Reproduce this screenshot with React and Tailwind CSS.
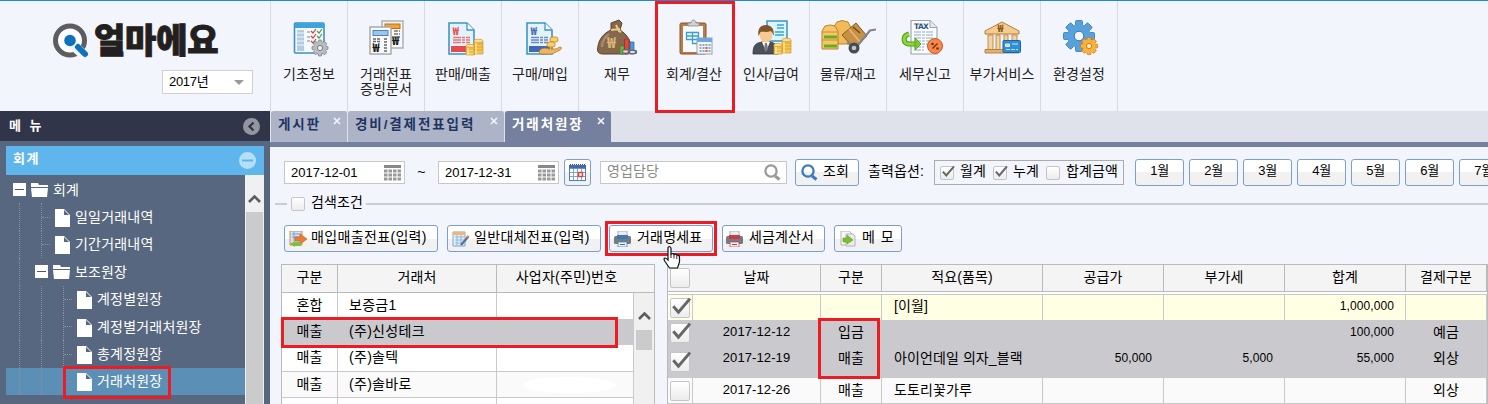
import React from 'react'


const toolbar = [
  { lines: ['기초정보'], icon: 'basic' },
  { lines: ['거래전표', '증빙문서'], icon: 'slip' },
  { lines: ['판매/매출'], icon: 'sales' },
  { lines: ['구매/매입'], icon: 'purchase' },
  { lines: ['재무'], icon: 'finance' },
  { lines: ['회계/결산'], icon: 'account', marked: true },
  { lines: ['인사/급여'], icon: 'hr' },
  { lines: ['물류/재고'], icon: 'stock' },
  { lines: ['세무신고'], icon: 'tax' },
  { lines: ['부가서비스'], icon: 'extra' },
  { lines: ['환경설정'], icon: 'settings' },
]

const tree = [
  { label: '회계', depth: 0, folder: true },
  { label: '일일거래내역', depth: 1 },
  { label: '기간거래내역', depth: 1 },
  { label: '보조원장', depth: 1, folder: true },
  { label: '계정별원장', depth: 2 },
  { label: '계정별거래처원장', depth: 2 },
  { label: '총계정원장', depth: 2 },
  { label: '거래처원장', depth: 2, selected: true },
]

const months = ['1월', '2월', '3월', '4월', '5월', '6월', '7월']

const customers = [
  { type: '혼합', name: '보증금1', h: 'h-[26px] bg-white' },
  { type: '매출', name: '(주)신성테크', h: 'h-[26px] bg-[#c9c9ce]', marked: true },
  { type: '매출', name: '(주)솔텍', h: 'h-[27px] bg-white border-b border-[#c9c9cc]' },
  { type: '매출', name: '(주)솔바로', h: 'h-[26px] bg-[#fafafa] border-b border-[#c9c9cc]', blank: true },
  { type: '', name: '', h: 'h-[8px] bg-white' },
]

const ledger = [
  { checked: true, date: '', type: '', memo: '[이월]', supply: '', vat: '', total: '1,000,000', pay: '', h: 'h-[25px] bg-[#ffffe4] leading-[22px]' },
  { checked: true, date: '2017-12-12', type: '입금', memo: '', supply: '', vat: '', total: '100,000', pay: '예금', h: 'h-[26px] bg-[#c9c9ce] leading-[24px]' },
  { checked: true, date: '2017-12-19', type: '매출', memo: '아이언데일 의자_블랙', supply: '50,000', vat: '5,000', total: '55,000', pay: '외상', h: 'h-[32px] bg-[#c9c9ce] leading-[24px]' },
  { checked: false, date: '2017-12-26', type: '매출', memo: '도토리꽃가루', supply: '', vat: '', total: '', pay: '외상', h: 'h-[26px] bg-[#fafafa] border-b border-[#c9c9cc] leading-[24px]' },
]

const ledgerCols = 'grid grid-cols-[25px_128px_61px_161px_121px_121px_121px_81px]'


const RedFrame = ({ cn }) => (
  <div className={`absolute z-10 border-[3px] border-[#ed1c24] pointer-events-none ${cn}`}></div>
)

const Coins = ({ x, y }) => (
  <g transform={`translate(${x} ${y})`} stroke="#c98a1c" strokeWidth=".6">
    <path d="M8 2v13h9V2z" fill="#f7c64f" />
    <path d="M0 7v9h8V7z" fill="#fbd367" />
    <path d="M8 5h9M8 8h9M8 11h9M0 10h8M0 13h8" />
    <path d="M10 3v12M2 8v8" stroke="#ffecac" strokeWidth="1.3" />
    <ellipse cx="12.5" cy="2" rx="4.6" ry="1.8" fill="#ffe08a" />
    <ellipse cx="4" cy="7" rx="4.2" ry="1.7" fill="#ffe08a" />
  </g>
)

// document with a folded corner, shared by sales and purchase
const WonDoc = ({ color, x }) => (
  <g transform={`translate(${x} 3)`}>
    <path d="M1 1h18l7 7v24H1z" fill="#e4f3fb" stroke="#3c97c4" strokeWidth="1.6" />
    <path d="M19 1v7h7" fill="#fff" stroke="#3c97c4" strokeWidth="1.3" />
    <text x="4.5" y="13" fontSize="11" fontWeight="700" fill={color} fontFamily="Noto Sans CJK KR">₩</text>
    <path d="M5 15.500h17M5 18h17M5 20.500h17" stroke={color} strokeWidth="1.400" strokeDasharray="8 1 3 1" opacity=".75" />
    <path d="M3 24h21v6H3z" fill={color} />
  </g>
)

const Gear = ({ cx, cy, r, fill, stroke, hole, tooth, bg }) => (
  <g>
    {[0, 45, 90, 135].map((a) => (
      <rect key={a} x={cx - tooth / 2} y={cy - r} width={tooth} height={r * 2} rx="1" fill={fill} stroke={stroke} strokeWidth=".8" transform={`rotate(${a} ${cx} ${cy})`} />
    ))}
    <circle cx={cx} cy={cy} r={r * 0.76} fill={fill} />
    <circle cx={cx} cy={cy} r={hole} fill={bg} stroke={stroke} strokeWidth="1" />
  </g>
)

const icons = {
  basic: (
    <>
      <rect x="13.500" y="4" width="29.500" height="30" rx="1" fill="#f4f9fd" stroke="#3c93c0" strokeWidth="1.600" />
      <path d="M14 4h29v5H14z" fill="#3aa3e0" />
      <path d="M16 11h7v21h-7z" fill="#b4cbe4" />
      <path d="M16 14h7M16 18h7M16 22h7M16 26h7" stroke="#fff" strokeWidth=".8" />
      <path d="M26 13h3M26 18h3M26 22h3" stroke="#aaa" strokeWidth="1.300" />
      <path d="M30 12l2 2 3-4M30 17l2 2 3-4M30 22l2 2 3-4" stroke="#d3453c" strokeWidth="1.200" fill="none" />
      <path d="M36 12l2 2 3-4M36 17l2 2 3-4" stroke="#4f9b42" strokeWidth="1.200" fill="none" />
      <Gear cx={39} cy={29} r={8} tooth={3.6} fill="#b9bcc0" stroke="#777b80" hole={2.6} bg="#eef2f7" />
    </>
  ),
  slip: (
    <>
      <rect x="24" y="2" width="21" height="27" fill="#f7f7f7" stroke="#aeb1b5" strokeWidth="1.500" />
      <rect x="27" y="5" width="15" height="4.500" fill="#f6a23a" stroke="#c06e10" />
      <path d="M27 13h6M36 12h6M36 15h6M36 18h6" stroke="#777" strokeWidth="1.300" strokeDasharray="4 1" />
      <text x="34" y="25.500" fontSize="12" fontWeight="700" fill="#111" fontFamily="Noto Sans CJK KR">₩</text>
      <rect x="12" y="8" width="21" height="27" fill="#fafafa" stroke="#a7aaae" strokeWidth="1.500" />
      <rect x="15" y="11.500" width="15" height="5" fill="#9cc6ef" stroke="#5183bb" />
      <path d="M15 20h7M15 22.500h7M26 20h4M26 23h4M26 26h4M26 29h4M26 32h4" stroke="#666" strokeWidth="1.300" strokeDasharray="3 1" />
      <text x="14.500" y="33" fontSize="12" fontWeight="700" fill="#111" fontFamily="Noto Sans CJK KR">₩</text>
    </>
  ),
  sales: (
    <>
      <WonDoc color="#e54a4f" x={13} />
      <Coins x={31} y={20} />
    </>
  ),
  purchase: (
    <>
      <WonDoc color="#4468b4" x={14} />
      <path d="M27 32c5-5 8-2 11-2h6l4-2c2 0 2 2 0 3l-8 4H28z" fill="#f0b562" stroke="#b87821" strokeWidth=".8" />
      <rect x="38" y="18" width="8" height="5" rx="2" fill="#f9cf6c" stroke="#c48418" strokeWidth=".8" />
      <rect x="35" y="23" width="8" height="5" rx="2" fill="#f9cf6c" stroke="#c48418" strokeWidth=".8" />
    </>
  ),
  finance: (
    <>
      <path d="M22 4l8-3 3 3-2 7c7 4 12 12 11 20-1 4-3 4-7 4H14C8 35 8 31 9 27c1-7 6-13 13-16z" fill="#85684b" stroke="#5c432b" strokeWidth="1" />
      <path d="M20 15c-4 3-7 8-7 13" stroke="#a98a67" strokeWidth="2.500" fill="none" />
      <path d="M22 11l9-1M27 6l3 6 2 1" stroke="#e8c989" strokeWidth="2" fill="none" />
      <text x="18" y="28.500" fontSize="15" fontWeight="700" fill="#dcb878" fontFamily="Noto Sans CJK KR">₩</text>
      <path d="M31 27h4v8h-4z" fill="#71b443" stroke="#447b22" strokeWidth=".7" />
      <path d="M35.500 20h4.500v15h-4.500z" fill="#e1473c" stroke="#98261f" strokeWidth=".7" />
      <path d="M41 23h4v12h-4z" fill="#4b9bdc" stroke="#27659a" strokeWidth=".7" />
      <path d="M35 32.500h5M41 33h5" stroke="#666b70" strokeWidth="4.500" strokeLinecap="round" />
      <path d="M35 32.500h3M42 33h3" stroke="#dfe3e6" strokeWidth="1.800" strokeLinecap="round" />
    </>
  ),
  account: (
    <>
      <rect x="14" y="4" width="26" height="31" rx="1.500" fill="#b97d4a" stroke="#85542b" strokeWidth="1" />
      <rect x="17" y="7" width="20" height="26" fill="#f8fafc" />
      <path d="M22 7V4h3c0-4 5-4 5 0h3v3z" fill="#ced2d6" stroke="#858b91" strokeWidth=".8" />
      <path d="M20.500 13.500h12v7h-12zM20.500 17h12M26.500 13.500v11h6" stroke="#36a0d5" strokeWidth="1.300" fill="none" />
      <rect x="31" y="19" width="15" height="16" fill="#f4f6f8" stroke="#95a0aa" strokeWidth="1" />
      <path d="M31 19h15v4H31z" fill="#6da9dc" />
      <path d="M33.500 26h11M33.500 29h11M33.500 32h11" stroke="#7290ac" strokeWidth="1.700" strokeDasharray="2 1" />
      <path d="M39.500 29h2M39.500 32h2" stroke="#e64b3c" strokeWidth="1.700" />
    </>
  ),
  hr: (
    <>
      <path d="M24 2h20v20H24z" fill="#dff3fd" stroke="#3498c8" strokeWidth="1.500" />
      <path d="M34 6h7M34 9h7M32 13h9M32 16h9" stroke="#34a6e0" strokeWidth="1.700" />
      <path d="M10 35c0-8 2-11 9-12h8c6 1 8 4 8 12z" fill="#4d5057" stroke="#303238" strokeWidth=".8" />
      <path d="M19 23l4 9 4-9z" fill="#fff" />
      <path d="M22 24h2l1 6-2 3-2-3z" fill="#777d85" />
      <ellipse cx="23" cy="15.500" rx="6.500" ry="8" fill="#f6cb91" />
      <path d="M15.500 17C14 8 19 6 23 6s9 3 7.500 11c-1-3-1-4-3-5-4 2-8 0-10 1-1 1-1 3-2 4z" fill="#7f5628" />
      <Coins x={31} y={19} />
    </>
  ),
  stock: (
    <>
      <path d="M13 9l4-6 5-1.500 6 1.500 3 6v16H13z" fill="#f0bb58" stroke="#b9822a" strokeWidth="1" />
      <path d="M2 12l3-5 5-1 5 1 3 5v18H2z" fill="#f6c668" stroke="#b9822a" strokeWidth="1" />
      <path d="M2 13h16M2 21h16" stroke="#c88f30" strokeWidth="1" />
      <path d="M4 18h13M4 27h13" stroke="#67ad27" strokeWidth="3" />
      <path d="M22 16L36 4l11 13-13 12z" fill="#c89045" stroke="#845a22" strokeWidth="1" />
      <path d="M29 10l11 13" stroke="#e5b878" strokeWidth="1.700" />
      <path d="M33 8l7 6" stroke="#6f4919" strokeWidth="1.500" />
      <path d="M56 10.500l-6 1-14 17-9-5" stroke="#80868c" strokeWidth="2.200" fill="none" />
      <circle cx="34" cy="29" r="5.500" fill="#484c51" />
      <circle cx="34" cy="29" r="2.300" fill="#c1c5c9" />
    </>
  ),
  tax: (
    <>
      <path d="M14 1.500h19l7 7V35H14z" fill="#fbfcfd" stroke="#9aa1a8" strokeWidth="1.100" />
      <path d="M33 1.500v7h7" fill="#e6eaee" stroke="#9aa1a8" />
      <text x="17" y="10" fontSize="7.500" fontWeight="700" fill="#31557f" fontFamily="DejaVu Sans" textLength="15">TAX</text>
      <path d="M17 13h20M17 16h20M17 19h20M17 22h20M17 25h16M17 28h10M17 31h10" stroke="#90a8c3" strokeWidth="1.200" strokeDasharray="7 1 3 1" />
      <path d="M12 15c-7 2-6 10 0 10h7" stroke="#4c9e16" strokeWidth="5" fill="none" />
      <path d="M12 15c-7 2-6 10 0 10h7" stroke="#93d63c" strokeWidth="3" fill="none" />
      <path d="M18 19l6 6-6 6z" fill="#7bc92a" stroke="#4c9e16" strokeWidth=".8" />
      <circle cx="38" cy="27" r="7.500" fill="#f5884a" stroke="#cd5a20" strokeWidth="1" />
      <path d="M35.500 29.500l5-5" stroke="#7a3110" strokeWidth="1.500" />
      <circle cx="35.500" cy="25" r="1.300" fill="#7a3110" />
      <circle cx="40.500" cy="29.500" r="1.300" fill="#7a3110" />
    </>
  ),
  extra: (
    <>
      <path d="M11 12L28 3l17 9v3H11z" fill="#f4cc8d" stroke="#b57c35" strokeWidth="1" />
      <text x="23.500" y="13" fontSize="10" fontWeight="700" fill="#815321" fontFamily="Noto Sans CJK KR">₩</text>
      <path d="M14 16h5v15h-5zM22 16h4v15h-4zM30 16h4v15h-4zM38 16h5v15h-5z" fill="#f4d3a0" stroke="#b9853f" strokeWidth=".9" />
      <path d="M11 30.500h34V34H11z" fill="#e5b26b" stroke="#a9722d" strokeWidth=".8" />
      <rect x="29" y="21.500" width="17.500" height="12" rx="1" fill="#2e8fd8" stroke="#1765a4" strokeWidth="1" />
      <path d="M31.500 25h4v2.500h-4zM38 25h6" fill="#f7cf65" stroke="#dff1ff" strokeWidth=".9" />
      <path d="M32 30.500h12" stroke="#b6dcf7" strokeWidth="1.200" strokeDasharray="4 1" />
    </>
  ),
  settings: (
    <>
      <Gear cx={28} cy={17} r={15.5} tooth={7} fill="#57a2dc" stroke="#3476b1" hole={4.8} bg="#f2f5fb" />
      <Gear cx={38} cy={27} r={8.6} tooth={4} fill="#f9b13e" stroke="#ca7c16" hole={2.6} bg="#fff0cd" />
    </>
  ),
}

const ToolItem = ({ item }) => (
  <div className="relative flex w-[77px] shrink-0 flex-col items-center border-r border-[#d6dae3] pt-[18px]">
    <svg className="h-[38px] w-14" viewBox="0 0 56 38">{icons[item.icon]}</svg>
    <div className="mt-[10px] text-center leading-[15px] whitespace-nowrap text-[#222]">
      {item.lines.map((l) => <div key={l}>{l}</div>)}
    </div>
    {item.marked && <RedFrame cn="-left-px top-0 h-[112px] w-[80px]" />}
  </div>
)

const Header = () => (
  <header className="flex h-[111px] border-t border-[#2189cf] bg-[#f2f5fb]">
    <div className="w-[271px] shrink-0 border-r border-[#d6dae3]">
      <div className="flex h-[57px] items-start pl-[52px] pt-[21px]">
        <svg className="h-9 w-[38px]" viewBox="0 0 38 36">
          <circle cx="18" cy="18.500" r="14.500" fill="#fff" stroke="#5b5d60" strokeWidth="5" />
          <path d="M20 22l15 14" stroke="#f2f5fb" strokeWidth="10" />
          <circle cx="18" cy="18.500" r="5.800" fill="#0e72ba" />
          <path d="M26 25l7 7" stroke="#0e72ba" strokeWidth="6" strokeLinecap="round" />
        </svg>
        <span className="ml-[4px] mt-[2px] text-[34px] font-black leading-[34px] tracking-[-0.2px] whitespace-nowrap text-[#231f20] [-webkit-text-stroke:1px_#231f20]">얼마에요</span>
      </div>
      <div className="ml-[162px] mt-[12px] flex h-6 w-[91px] items-center justify-between border border-[#cfd0d4] bg-white pl-[6px] pr-2">
        <span className="text-[13px] leading-5 tracking-[-0.3px] text-black">2017년</span>
        <span className="h-0 w-0 border-x-[5px] border-t-[5px] border-x-transparent border-t-[#999]"></span>
      </div>
    </div>
    <nav className="flex">
      {toolbar.map((t) => <ToolItem key={t.icon} item={t} />)}
    </nav>
  </header>
)


const Expander = () => (
  <span className="relative flex h-[13px] w-[13px] shrink-0 items-center justify-center bg-white">
    <span className="h-px w-[9px] bg-[#555]"></span>
  </span>
)

const TreeRow = ({ node }) => {
  const guides = node.folder ? node.depth : node.depth + 1
  return (
    <li className={`relative flex h-[27.4px] items-center ${node.selected ? 'bg-[#5b8fb5]' : ''}`}>
      {Array.from({ length: guides }, (_, i) => (
        <span key={i} className="flex h-full w-[22px] shrink-0 items-center pl-[13px]">
          <span className="h-full border-l border-dotted border-[#8b9099]"></span>
          {!node.folder && i === guides - 1 && <span className="w-2 border-t border-dotted border-[#8b9099]"></span>}
        </span>
      ))}
      {node.folder ? (
        <>
          <span className="ml-[7px]"><Expander /></span>
          <svg className="ml-[5px] h-[14px] w-[17px]" viewBox="0 0 17 14">
            <path d="M0 0h7l1 2h9v2H0z" fill="#fff" />
            <path d="M0 5h17l-1 9H1z" fill="#fff" />
          </svg>
          <span className="ml-[5px] leading-5 whitespace-nowrap">{node.label}</span>
        </>
      ) : (
        <>
          <svg className="ml-[5px] mt-[2px] h-[18px] w-[15px]" viewBox="0 0 15 18">
            <path d="M0 0h9l6 6v12H0z" fill="#fff" />
            <path d="M9 1v5h5z" fill="#57677f" />
          </svg>
          <span className="ml-[5px] leading-5 tracking-[0.2px] whitespace-nowrap">{node.label}</span>
        </>
      )}
      {node.selected && <RedFrame cn="left-[57px] top-[-2px] h-[33px] w-[108px]" />}
    </li>
  )
}

const Chevron = () => (
  <svg className="h-2 w-[13px]" viewBox="0 0 13 8">
    <path d="M1 7l5.500-5.500L12 7" fill="none" stroke="#5c5c5c" strokeWidth="2.600" />
  </svg>
)

const Sidebar = () => (
  <aside className="flex w-[270px] shrink-0 flex-col bg-[#57677f] text-white">
    <div className="flex h-[30px] shrink-0 items-center justify-between bg-[#30354a] pl-[9px] pr-[10px]">
      <span className="text-[13px] font-bold tracking-[1.5px] [word-spacing:2px]">메 뉴</span>
      <svg className="h-[17px] w-[17px]" viewBox="0 0 17 17">
        <circle cx="8.500" cy="8.500" r="8.500" fill="#94969f" />
        <path d="M10.500 4.500l-4 4 4 4" fill="none" stroke="#30354a" strokeWidth="2.300" />
      </svg>
    </div>
    <div className="mx-[6px] mt-[5px] flex h-[29px] shrink-0 items-center justify-between bg-[#5fb6ec] pl-[7px] pr-2">
      <span className="pb-[3px] text-[13px] font-bold tracking-[1.5px]">회계</span>
      <svg className="h-[17px] w-[17px]" viewBox="0 0 17 17">
        <circle cx="8.500" cy="8.500" r="8.500" fill="#b5def7" />
        <path d="M3 8.500h11" stroke="#5fb6ec" strokeWidth="2" />
      </svg>
    </div>
    <div className="mx-[6px] flex flex-1">
      <ul className="w-[239px] pt-px">
        {tree.map((n) => <TreeRow key={n.label + n.depth} node={n} />)}
      </ul>
      <div className="flex w-[19px] flex-col items-center bg-[#f0f0f0]">
        <div className="flex h-[37px] shrink-0 items-center pt-[11px]"><Chevron /></div>
        <div className="w-[17px] flex-1 bg-[#cbcbcb]"></div>
      </div>
    </div>
  </aside>
)


const Tab = ({ label, cn, active }) => (
  <div className={`flex h-[31px] items-start justify-between rounded-t-[3px] pl-[7px] pr-[6px] ${cn} ${active ? 'bg-[#75809f] text-white' : 'bg-[#aeb4c8] text-[#1f3463]'}`}>
    <span className="pt-[4px] text-[13.5px] font-bold leading-5 tracking-[1.9px] whitespace-nowrap">{label}</span>
    <svg className="-ml-2 mt-[6px] h-2 w-2 shrink-0" viewBox="0 0 8 8">
      <path d="M1 1l6 6M7 1L1 7" stroke="#f3f5f9" strokeWidth="1.700" />
    </svg>
  </div>
)

const Tabs = () => (
  <div className="flex h-9 shrink-0 gap-px border-b-[5px] border-[#75809f] bg-[#dfe2ea] pl-px">
    <Tab label="게시판" cn="w-[76px]" />
    <Tab label="경비/결제전표입력" cn="w-[156px]" />
    <Tab label="거래처원장" cn="w-[106px]" active />
  </div>
)

const DateInput = ({ value }) => (
  <div className="flex h-[23px] w-[121px] shrink-0 items-center justify-between border border-[#c6c7ca] bg-white pl-[6px] pr-[3px]">
    <span className="text-[13px] tracking-[0px] text-black">{value}</span>
    <svg className="h-4 w-[17px]" viewBox="0 0 17 16">
      <path d="M0 1.500h17" stroke="#888" strokeWidth="3" />
      <path d="M0 6h17M0 10h17M0 14h17" stroke="#999" strokeWidth="3" strokeDasharray="3.500 1" />
    </svg>
  </div>
)

const Button = ({ cn, children }) => (
  <button className={`relative flex h-[27px] shrink-0 items-center rounded-[3px] border border-[#7f9fcb] bg-linear-to-b from-white from-50% to-[#f1f1f2] to-50% whitespace-nowrap text-black ${cn}`}>
    {children}
  </button>
)

const Check = ({ on, cn }) => (
  <span className={`relative block shrink-0 rounded-[2px] border border-[#c4c5c8] bg-linear-to-b from-white to-[#ececec] ${cn}`}>
    {on && (
      <svg className="absolute -right-px -top-px h-full w-full overflow-visible" viewBox="0 0 14 14">
        <path d="M1 6.500l4 4.500L14 .5" fill="none" stroke="#666" strokeWidth="2.300" />
      </svg>
    )}
  </span>
)

const Magnifier = ({ color, cn }) => (
  <svg className={cn} viewBox="0 0 17 17">
    <circle cx="7" cy="7" r="5.600" fill="none" stroke={color} strokeWidth="2.300" />
    <path d="M11 12l4.500 3.500" stroke={color} strokeWidth="3" />
  </svg>
)

const SearchBar = () => (
  <div className="flex h-[27px] items-center pl-[14px]">
    <DateInput value="2017-12-01" />
    <span className="w-[33px] shrink-0 text-center text-black">~</span>
    <DateInput value="2017-12-31" />
    <Button cn="ml-[5px] w-[27px] justify-center">
      <svg className="h-[17px] w-[17px]" viewBox="0 0 17 17">
        <rect x=".5" y="1.500" width="16" height="15" fill="#fff" stroke="#4b7ec4" />
        <path d="M0 3h17" stroke="#3a6bb4" strokeWidth="3.500" />
        <path d="M1 0h16" stroke="#555" strokeWidth="2" strokeDasharray="1 1" />
        <path d="M1 8.500h15M1 12.500h15M4.500 5v11M8.500 5v11M12.500 5v11" stroke="#7ba4dc" />
        <rect x="9.500" y="8.500" width="4" height="4" fill="#fff" stroke="#e0492c" strokeWidth="1.500" />
      </svg>
    </Button>
    <div className="ml-[9px] flex h-[23px] w-[187px] shrink-0 items-center justify-between border border-[#c6c7ca] bg-white pl-[6px] pr-[5px]">
      <span className="pb-[3px] text-[#888]">영업담당</span>
      <Magnifier color="#999" cn="h-[17px] w-[17px]" />
    </div>
    <Button cn="ml-2 w-16 pl-[5px]">
      <Magnifier color="#3f78bd" cn="h-[17px] w-[17px]" />
      <span className="ml-[5px] pb-[2px]">조회</span>
    </Button>
    <span className="ml-[9px] w-[66px] shrink-0 pb-[2px] whitespace-nowrap text-black">출력옵션:</span>
    <div className="flex h-[25px] w-[190px] shrink-0 items-center border border-[#a9abae] pl-[5px] whitespace-nowrap text-black">
      <Check on cn="h-[14px] w-[14px]" />
      <span className="ml-[6px] w-[33px] pb-[2px]">월계</span>
      <Check on cn="h-[14px] w-[14px]" />
      <span className="ml-[6px] w-[33px] pb-[2px]">누계</span>
      <Check cn="h-[14px] w-[14px]" />
      <span className="ml-[6px] pb-[2px]">합계금액</span>
    </div>
    <div className="ml-[11px] flex shrink-0 gap-[5px]">
      {months.map((m) => (
        <Button key={m} cn="w-[49px] justify-center"><span className="pb-[3px] text-[13px] tracking-[-0.3px]">{m}</span></Button>
      ))}
    </div>
  </div>
)

const Printer = ({ color }) => (
  <svg className="h-4 w-[17px]" viewBox="0 0 17 16">
    <path d="M4 0h9v5H4z" fill="#e8edf3" stroke="#9aa0a6" strokeWidth=".8" />
    <rect x="0" y="5" width="17" height="8" rx="1.500" fill="#777b81" />
    <path d="M3 4h11v4H3z" fill={color} />
    <path d="M4 11h9v5H4z" fill="#e9f1f9" stroke={color} strokeWidth=".7" />
    <path d="M6 13.500h5" stroke={color} />
  </svg>
)

const HandCursor = () => (
  <svg className="absolute left-[53px] top-[20px] z-20 h-[23px] w-[18px]" viewBox="0 0 18 23">
    <path d="M5 1.500c1-1.300 2.700-1 3 .8V8c1-.8 2.500-.6 3 .5 1-.7 2.300-.3 2.700.8 1.300-.5 2.800.1 2.800 1.700V16l-2 6H6.500L2 15.500C.5 13 1 12 2 12c1.200 0 2 1 3 2z" fill="#fff" stroke="#111" strokeWidth="1.200" />
    <path d="M8 8v4M11 9v3.500M13.800 10v3" stroke="#111" strokeWidth=".9" />
  </svg>
)

const ActionBar = () => (
  <div className="flex h-[27px] pl-[14px]">
    <Button cn="w-[154px] pl-1">
      <svg className="h-4 w-[18px]" viewBox="0 0 18 16">
        <path d="M1 0h12v14H1z" fill="#cfe2f5" stroke="#e08842" />
        <path d="M3 3h9M3 6h9M5 1v9" stroke="#7fa3c9" />
        <path d="M6 6h5V3l7 5-7 5v-3H6z" fill="#ee7b35" stroke="#c85617" strokeWidth=".6" />
        <path d="M12 11v4H6v1l-5-3 5-3v1z" fill="#7bc143" />
      </svg>
      <span className="ml-1 pb-[3px] tracking-[0.35px]">매입매출전표(입력)</span>
    </Button>
    <Button cn="ml-[9px] w-[154px] pl-1">
      <svg className="h-4 w-[18px]" viewBox="0 0 18 16">
        <path d="M1 1h12v14H1z" fill="#e5f1fb" stroke="#7ca5cc" />
        <path d="M1 1h12v3H1z" fill="#f2b575" />
        <path d="M3 6h9M3 9h9M3 12h9M5 4v11M9 4v11" stroke="#91b6d9" />
        <path d="M9 14l7-8" stroke="#54749e" strokeWidth="2.300" />
        <path d="M15 7l1.500-2" stroke="#e0742c" strokeWidth="2.500" />
      </svg>
      <span className="ml-1 pb-[3px] tracking-[0.35px]">일반대체전표(입력)</span>
    </Button>
    <Button cn="ml-2 w-[104px] pl-1">
      <Printer color="#3c79b9" />
      <span className="ml-[6px] pb-[3px] tracking-[0.2px]">거래명세표</span>
      <RedFrame cn="-left-[5px] -top-[5px] h-[35px] w-[112px]" />
      <HandCursor />
    </Button>
    <Button cn="ml-[9px] w-[103px] pl-[3px]">
      <Printer color="#c93c3f" />
      <span className="ml-[6px] pb-[3px]">세금계산서</span>
    </Button>
    <Button cn="ml-[9px] w-[68px] pl-[5px]">
      <svg className="h-4 w-4" viewBox="0 0 16 16">
        <path d="M1 0h8l3 3v11H1z" fill="#f6f7f8" stroke="#b1b5b9" />
        <path d="M6 3h7l2 2v10H6z" fill="#ebedef" stroke="#b1b5b9" />
        <path d="M3 7h4V4l6 5-6 4v-2H3z" fill="#7fbe2e" stroke="#5d9b18" strokeWidth=".6" />
      </svg>
      <span className="ml-[6px] pb-[3px] tracking-[1px]">메 모</span>
    </Button>
  </div>
)

const CustomerTable = () => {
  const cols = 'grid grid-cols-[56px_159px_137px]'
  return (
    <div className="relative flex w-[374px] shrink-0 flex-col border-x border-t border-[#b9babd] bg-white text-black">
      <div className="grid h-[28px] shrink-0 grid-cols-[56px_159px_1fr] border-b border-[#b9babd] bg-[#f4f4f5] text-center leading-[25px]">
        <span className="border-r border-[#b9babd]">구분</span>
        <span className="border-r border-[#b9babd]">거래처</span>
        <span className="pr-[18px] tracking-[0.25px]">사업자(주민)번호</span>
      </div>
      <div className="flex flex-1">
        <div className="w-[352px]">
          {customers.map((c, i) => (
            <div key={i} className={`relative leading-[24px] ${cols} ${c.h}`}>
              <span className="border-r border-[#c9c9cc] text-center">{c.type}</span>
              <span className="border-r border-[#c9c9cc] pl-[11px] tracking-[0.3px]">{c.name}</span>
              <span className="flex items-center border-r border-[#c9c9cc] pl-[25px]">
                {c.blank && <span className="h-4 w-[94px] rounded-[50%] bg-white"></span>}
              </span>
              {c.marked && <RedFrame cn="-left-px -top-[2px] h-[31px] w-[337px]" />}
            </div>
          ))}
        </div>
        <div className="flex flex-1 flex-col items-center bg-[#f0f0f0] pt-[19px]">
          <Chevron />
          <div className="mt-[10px] h-5 w-4 bg-[#cbcbcb]"></div>
        </div>
      </div>
    </div>
  )
}

const LedgerTable = () => (
  <div className="relative w-[821px] shrink-0 border-x border-t border-[#b9babd] bg-white text-black">
    <div className={`h-[27px] border-b border-[#b9babd] bg-[#f4f4f5] text-center leading-[25px] ${ledgerCols}`}>
      <span className="flex items-center pl-[2px]"><Check cn="h-5 w-5" /></span>
      {['날짜', '구분', '적요(품목)', '공급가', '부가세', '합계', '결제구분'].map((h) => (
        <span key={h} className="border-r border-[#b9babd]">{h}</span>
      ))}
    </div>
    <div className="h-[3px] border-b border-[#c9c9cc]"></div>
    {ledger.map((r, i) => (
      <div key={i} className={`[&>span]:border-r [&>span]:border-[#c9c9cc] ${ledgerCols} ${r.h}`}>
        <span className="flex items-center pl-[2px]"><Check on={r.checked} cn="h-5 w-5" /></span>
        <span className="text-center text-[13px]">{r.date}</span>
        <span className="text-center">{r.type}</span>
        <span className="pl-3 whitespace-nowrap">{r.memo}</span>
        <span className="pr-[11px] text-right text-[12px]">{r.supply}</span>
        <span className="pr-[11px] text-right text-[12px]">{r.vat}</span>
        <span className="pr-[11px] text-right text-[12px]">{r.total}</span>
        <span className="text-center">{r.pay}</span>
      </div>
    ))}
    <RedFrame cn="left-[150px] top-[53px] h-[61px] w-[62px]" />
  </div>
)

const App = () => {
  return (
    <div className="flex h-[404px] w-[1488px] flex-col overflow-hidden bg-[#f2f5fb] font-['Liberation_Sans','Noto_Sans_CJK_KR',sans-serif] text-[14px] tracking-[0.1px]">
      <Header />
      <div className="flex min-h-0 flex-1">
        <Sidebar />
        <main className="flex min-w-0 flex-1 flex-col overflow-hidden">
          <Tabs />
          <div className="shrink-0 pt-3"><SearchBar /></div>
          <div className="mt-[6px] flex h-[24px] shrink-0 items-center pl-[5px]">
            <span className="h-[2px] w-3 bg-[#cbccd0]"></span>
            <Check cn="ml-1 h-[14px] w-[14px]" />
            <span className="ml-[6px] mr-[3px] pb-[4px] whitespace-nowrap text-black">검색조건</span>
            <span className="h-[2px] flex-1 bg-[#cbccd0]"></span>
          </div>
          <div className="mt-[9px] shrink-0"><ActionBar /></div>
          <div className="mt-3 flex min-h-0 flex-1 gap-3 pl-[11px]">
            <CustomerTable />
            <LedgerTable />
          </div>
        </main>
      </div>
    </div>
  )
}

export default App
